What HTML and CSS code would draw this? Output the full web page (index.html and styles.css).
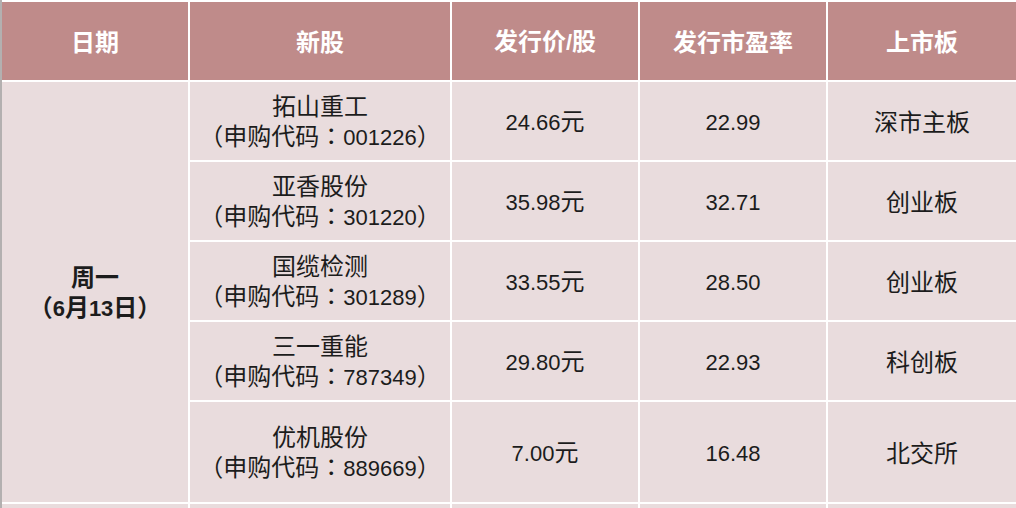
FILE: index.html
```html
<!DOCTYPE html>
<html lang="zh-CN">
<head>
<meta charset="utf-8">
<link rel="stylesheet" href="styles.css">
</head>
<body>
<div class="frame">
  <div class="grid">
    <div class="cell head"><div>日期</div></div>
    <div class="cell head"><div>新股</div></div>
    <div class="cell head"><div>发行价<span class="n">/</span>股</div></div>
    <div class="cell head"><div>发行市盈率</div></div>
    <div class="cell head"><div>上市板</div></div>

    <div class="cell date"><div>周一</div><div>（<span class="n">6</span>月<span class="n">13</span>日）</div></div>

    <div class="cell"><div>拓山重工</div><div>（申购代码<span class="c" lang="zh-TW">：</span><span class="n">001226</span>）</div></div>
    <div class="cell"><div><span class="n">24.66</span>元</div></div>
    <div class="cell"><div><span class="n">22.99</span></div></div>
    <div class="cell"><div>深市主板</div></div>

    <div class="cell"><div>亚香股份</div><div>（申购代码<span class="c" lang="zh-TW">：</span><span class="n">301220</span>）</div></div>
    <div class="cell"><div><span class="n">35.98</span>元</div></div>
    <div class="cell"><div><span class="n">32.71</span></div></div>
    <div class="cell"><div>创业板</div></div>

    <div class="cell"><div>国缆检测</div><div>（申购代码<span class="c" lang="zh-TW">：</span><span class="n">301289</span>）</div></div>
    <div class="cell"><div><span class="n">33.55</span>元</div></div>
    <div class="cell"><div><span class="n">28.50</span></div></div>
    <div class="cell"><div>创业板</div></div>

    <div class="cell"><div>三一重能</div><div>（申购代码<span class="c" lang="zh-TW">：</span><span class="n">787349</span>）</div></div>
    <div class="cell"><div><span class="n">29.80</span>元</div></div>
    <div class="cell"><div><span class="n">22.93</span></div></div>
    <div class="cell"><div>科创板</div></div>

    <div class="cell"><div>优机股份</div><div>（申购代码<span class="c" lang="zh-TW">：</span><span class="n">889669</span>）</div></div>
    <div class="cell"><div><span class="n">7.00</span>元</div></div>
    <div class="cell"><div><span class="n">16.48</span></div></div>
    <div class="cell"><div>北交所</div></div>

    <div class="cell"></div>
    <div class="cell"></div>
    <div class="cell"></div>
    <div class="cell"></div>
    <div class="cell"></div>
  </div>
</div>
</body>
</html>
```
FILE: styles.css
```css
html, body {
  margin: 0;
  padding: 0;
  background: #ffffff;
  overflow: hidden;
}
body {
  width: 1016px;
  height: 508px;
  font-family: "Noto Sans CJK SC", "Liberation Sans", sans-serif;
}
.frame {
  border-left: 2px solid #b3b0b0;
  padding-top: 2px;
  height: 506px;
  overflow: hidden;
}
.grid {
  display: grid;
  grid-template-columns: 186px 260px 186px 186px 188px;
  grid-template-rows: 78px 78px 78px 78px 78px 100px 60px;
  gap: 2px;
  background: #ffffff;
}
.cell {
  background: #e9dcdd;
  color: #1c1c1c;
  font-size: 24px;
  line-height: 30px;
  display: flex;
  flex-direction: column;
  align-items: center;
  justify-content: center;
  text-align: center;
  padding-top: 0;
  box-sizing: border-box;
  white-space: nowrap;
}
.n {
  font-family: "Liberation Sans", sans-serif;
  font-size: 22px;
}
.c {
  font-family: "Noto Sans CJK TC", sans-serif;
}
.head {
  background: #bf8b8a;
  color: #ffffff;
  font-weight: bold;
  padding-top: 0;
}
.date {
  grid-row: 2 / span 5;
  font-weight: bold;
  padding-top: 1px;
}
```
